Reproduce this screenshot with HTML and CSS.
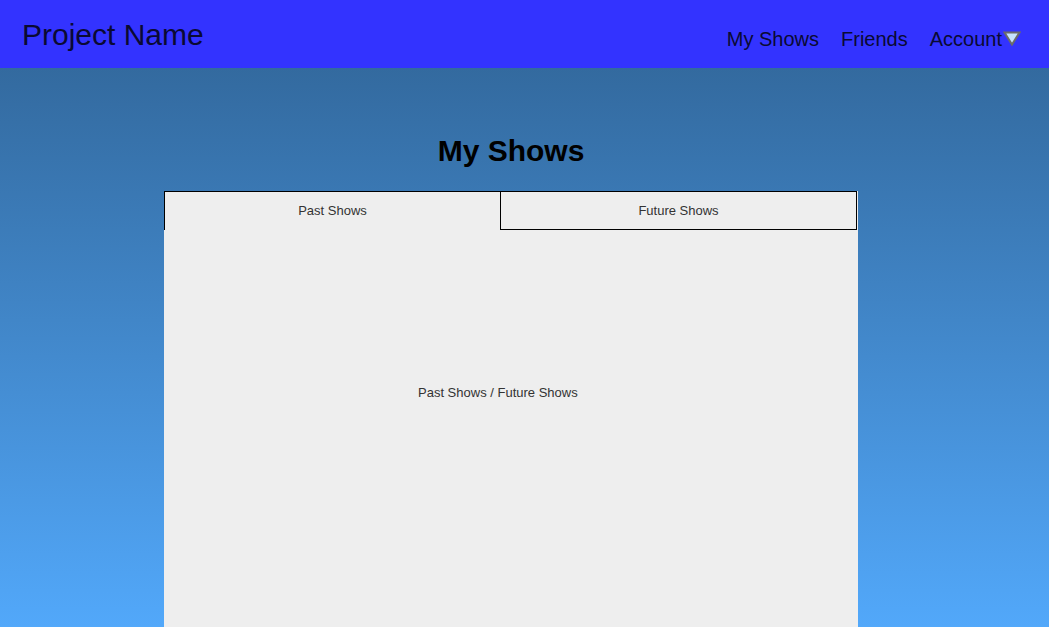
FILE: index.html
```html
<!DOCTYPE html>
<html lang="en">
<head>
<meta charset="utf-8">
<title>My Shows</title>
<link rel="stylesheet" href="styles.css">
</head>
<body>
<header class="topbar">
  <div class="brand">Project Name</div>
  <nav class="nav">
    <a class="nav-link" href="#">My Shows</a>
    <a class="nav-link" href="#">Friends</a>
    <a class="nav-link account" href="#">Account<svg class="caret" width="18" height="15" viewBox="0 0 18 15"><polygon points="1.5,1.5 16.5,1.5 9,13.5" fill="#c6e2ff" stroke="#6b6b6b" stroke-width="2" stroke-linejoin="miter"/></svg></a>
  </nav>
</header>
<main class="page">
  <h1 class="title">My Shows</h1>
  <section class="panel">
    <div class="tabs">
      <div class="tab tab-active">Past Shows</div>
      <div class="tab tab-other">Future Shows</div>
    </div>
    <div class="tab-content">Past Shows / Future Shows</div>
  </section>
</main>
</body>
</html>
```
FILE: styles.css
```css
html, body {
  margin: 0;
  padding: 0;
  height: 100%;
}
body {
  font-family: "Liberation Sans", Arial, sans-serif;
  background: #336699;
  display: flex;
  flex-direction: column;
  overflow: hidden;
}
.topbar {
  height: 68px;
  flex: none;
  background: #3333ff;
  display: flex;
  justify-content: space-between;
  align-items: flex-start;
  box-sizing: border-box;
  padding: 0 28px 0 22px;
}
.brand {
  font-size: 30px;
  line-height: 34px;
  padding-top: 18px;
  color: #0a0a33;
}
.nav {
  display: flex;
  gap: 22px;
  padding-top: 27px;
}
.nav-link {
  font-size: 20px;
  line-height: 24px;
  color: #0a0a33;
  text-decoration: none;
  display: flex;
  align-items: flex-start;
}
.account {
  gap: 1px;
}
.caret {
  margin-top: 4px;
  display: block;
}
.page {
  flex: 1;
  background: linear-gradient(to bottom, #336a9f 0%, #52a8fa 100%);
  padding: 66px 0 0 164px;
  box-sizing: border-box;
  display: flex;
  flex-direction: column;
  width: 100%;
}
.title {
  width: 694px;
  margin: 0 0 23px 0;
  text-align: center;
  font-size: 30px;
  line-height: 34px;
  font-weight: bold;
  color: #000;
}
.panel {
  width: 694px;
  flex: 1;
  background: #eeeeee;
  display: flex;
  flex-direction: column;
}
.tabs {
  display: flex;
  height: 39px;
}
.tab {
  font-size: 13px;
  color: #333;
  display: flex;
  align-items: center;
  justify-content: center;
  box-sizing: border-box;
  background: #eeeeee;
}
.tab-active {
  width: 336px;
  border-top: 1px solid #000;
  border-left: 1px solid #000;
  padding: 0 0 1px 0;
}
.tab-other {
  width: 357px;
  border: 1px solid #000;
}
.tab-content {
  font-size: 13px;
  color: #333;
  padding: 155px 0 0 254px;
  line-height: 16px;
}
```
